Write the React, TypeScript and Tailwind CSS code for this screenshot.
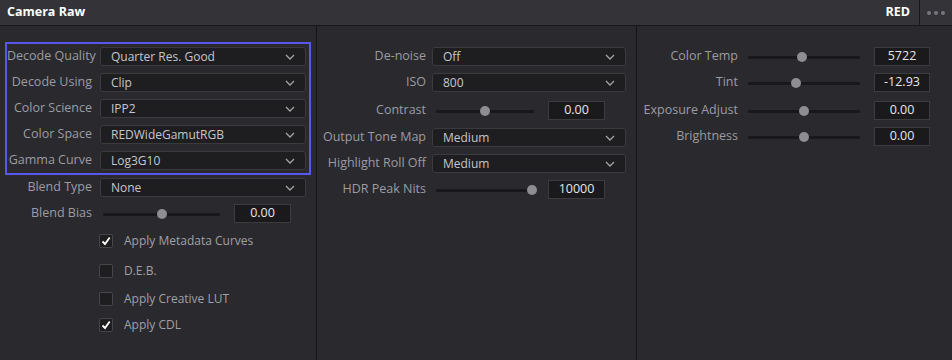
import React from "react";

const font = { fontFamily: '"Open Sans", "Noto Sans", sans-serif' };

function Chevron() {
  return (
    <svg width="10" height="6" viewBox="0 0 10 6" className="shrink-0">
      <path d="M1 1 L5 5 L9 1" fill="none" stroke="#a3a3a8" strokeWidth="1.3" />
    </svg>
  );
}

function Label({ text, w }: { text: string; w: string }) {
  return (
    <div className={`${w} shrink-0 whitespace-nowrap text-right text-[12.5px] leading-none text-[#9c9ca2]`}>
      {text}
    </div>
  );
}

function Dropdown({ value, w }: { value: string; w: string }) {
  return (
    <div
      className={`${w} flex h-[19px] items-center justify-between rounded-[3px] border border-[#3a3a3f] bg-[#1e1e21] pl-[10px] pr-[10px] text-[12px] text-[#c6c6ca]`}
    >
      <span className="leading-none">{value}</span>
      <Chevron />
    </div>
  );
}

function Slider({ w, pos }: { w: string; pos: number }) {
  return (
    <div className={`${w} relative h-[18px] shrink-0`}>
      <div className="absolute left-0 right-0 top-[8px] h-[3px] rounded-full bg-[#18181b]" />
      <div
        className="absolute top-[4.5px] h-[10px] w-[10px] -translate-x-1/2 rounded-full bg-[#8e8e92]"
        style={{ left: `${pos}%` }}
      />
    </div>
  );
}

function NumBox({ value, w }: { value: string; w: string }) {
  return (
    <div
      className={`${w} flex h-[19px] shrink-0 items-center justify-center border border-[#3c3c40] bg-[#1a1a1c] text-[12.5px] leading-none text-[#e6e6e8]`}
    >
      {value}
    </div>
  );
}

function Check({ checked, label, mt }: { checked: boolean; label: string; mt: string }) {
  return (
    <div className={`${mt} flex h-[18px] items-center pl-[99px]`}>
      <div className="flex h-[14px] w-[14px] items-center justify-center rounded-[2px] border border-[#45454a] bg-[#1e1e20]">
        {checked && (
          <svg width="10" height="10" viewBox="0 0 10 10">
            <path d="M1.5 5.5 L4 8 L8.7 1.5" fill="none" stroke="#ffffff" strokeWidth="1.8" />
          </svg>
        )}
      </div>
      <span className="ml-[11px] text-[12px] leading-none text-[#a0a0a5]">{label}</span>
    </div>
  );
}

function Row({ children, mt = "" }: { children: React.ReactNode; mt?: string }) {
  return <div className={`${mt} flex h-[19px] items-center`}>{children}</div>;
}

export default function App() {
  return (
    <div className="h-[360px] w-[952px] overflow-hidden bg-[#29292e]" style={font}>
      <div className="flex h-[26px] items-center border-b border-[#18181b] bg-[#333338]">
        <div className="pl-[7px] text-[12.5px] font-bold text-white">Camera Raw</div>
        <div className="ml-auto pr-[9px] text-[12.5px] font-bold text-white">RED</div>
        <div className="flex h-full w-[33px] items-center justify-center gap-[3px] border-l border-[#18181b]">
          <span className="h-[4px] w-[4px] rounded-full bg-[#77777c]" />
          <span className="h-[4px] w-[4px] rounded-full bg-[#77777c]" />
          <span className="h-[4px] w-[4px] rounded-full bg-[#77777c]" />
        </div>
      </div>

      <div className="flex h-[334px]">
        {/* left column */}
        <div className="w-[316px] shrink-0 pl-[5px] pt-[16px]">
          <div className="w-[306px] border-2 border-[#5858f0] pb-[3px] pt-[3px]">
            <div className="flex flex-col gap-[7px]">
              {[
                ["Decode Quality", "Quarter Res. Good"],
                ["Decode Using", "Clip"],
                ["Color Science", "IPP2"],
                ["Color Space", "REDWideGamutRGB"],
                ["Gamma Curve", "Log3G10"],
              ].map(([l, v]) => (
                <Row key={l}>
                  <Label text={l} w="w-[85px]" />
                  <div className="ml-[8px]">
                    <Dropdown value={v} w="w-[206px]" />
                  </div>
                </Row>
              ))}
            </div>
          </div>
          <div className="pl-[2px]">
            <Row mt="mt-[3px]">
              <Label text="Blend Type" w="w-[85px]" />
              <div className="ml-[8px]">
                <Dropdown value="None" w="w-[206px]" />
              </div>
            </Row>
            <Row mt="mt-[7px]">
              <Label text="Blend Bias" w="w-[85px]" />
              <div className="ml-[11px]">
                <Slider w="w-[117px]" pos={50} />
              </div>
              <div className="ml-[14px]">
                <NumBox value="0.00" w="w-[57px]" />
              </div>
            </Row>
          </div>
          <div className="-ml-[5px]">
            <Check checked label="Apply Metadata Curves" mt="mt-[9px]" />
            <Check checked={false} label="D.E.B." mt="mt-[12px]" />
            <Check checked={false} label="Apply Creative LUT" mt="mt-[10px]" />
            <Check checked label="Apply CDL" mt="mt-[8px]" />
          </div>
        </div>
        <div className="w-px shrink-0 bg-[#141417]" />

        {/* middle column */}
        <div className="w-[319px] shrink-0 pt-[21px]">
          <Row>
            <Label text="De-noise" w="w-[109px]" />
            <div className="ml-[6px]">
              <Dropdown value="Off" w="w-[194px]" />
            </div>
          </Row>
          <Row mt="mt-[7px]">
            <Label text="ISO" w="w-[109px]" />
            <div className="ml-[6px]">
              <Dropdown value="800" w="w-[194px]" />
            </div>
          </Row>
          <Row mt="mt-[9px]">
            <Label text="Contrast" w="w-[109px]" />
            <div className="ml-[10px]">
              <Slider w="w-[98px]" pos={50} />
            </div>
            <div className="ml-[14px]">
              <NumBox value="0.00" w="w-[57px]" />
            </div>
          </Row>
          <Row mt="mt-[8px]">
            <Label text="Output Tone Map" w="w-[109px]" />
            <div className="ml-[6px]">
              <Dropdown value="Medium" w="w-[194px]" />
            </div>
          </Row>
          <Row mt="mt-[7px]">
            <Label text="Highlight Roll Off" w="w-[109px]" />
            <div className="ml-[6px]">
              <Dropdown value="Medium" w="w-[194px]" />
            </div>
          </Row>
          <Row mt="mt-[7px]">
            <Label text="HDR Peak Nits" w="w-[109px]" />
            <div className="ml-[10px]">
              <Slider w="w-[98px]" pos={98} />
            </div>
            <div className="ml-[14px]">
              <NumBox value="10000" w="w-[57px]" />
            </div>
          </Row>
        </div>
        <div className="w-px shrink-0 bg-[#141417]" />

        {/* right column */}
        <div className="flex-1 pt-[21px]">
          {[
            ["Color Temp", "5722", 48, ""],
            ["Tint", "-12.93", 43, "mt-[7px]"],
            ["Exposure Adjust", "0.00", 50, "mt-[9px]"],
            ["Brightness", "0.00", 50, "mt-[7px]"],
          ].map(([l, v, p, m]) => (
            <Row key={l as string} mt={m as string}>
              <Label text={l as string} w="w-[101px]" />
              <div className="ml-[10px]">
                <Slider w="w-[112px]" pos={p as number} />
              </div>
              <div className="ml-[14px]">
                <NumBox value={v as string} w="w-[56px]" />
              </div>
            </Row>
          ))}
        </div>
      </div>
    </div>
  );
}
